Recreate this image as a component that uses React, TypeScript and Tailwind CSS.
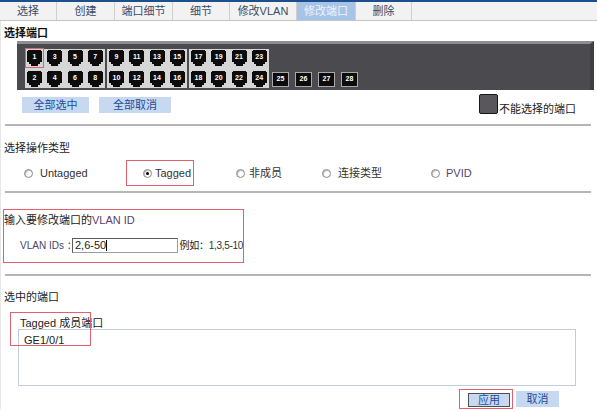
import React from "react";

const tabs = [
  { label: "选择", w: "w-[57px]" },
  { label: "创建", w: "w-[58px]" },
  { label: "端口细节", w: "w-[58px]" },
  { label: "细节", w: "w-[57px]" },
  { label: "修改VLAN", w: "w-[67px]" },
  { label: "修改端口", w: "w-[59px]", active: true },
  { label: "删除", w: "w-[56px]" },
];

const groups = [
  [1, 3, 5, 7, 2, 4, 6, 8],
  [9, 11, 13, 15, 10, 12, 14, 16],
  [17, 19, 21, 23, 18, 20, 22, 24],
];

function Port({ n, selected }: { n: number; selected?: boolean }) {
  return (
    <div
      className={
        "relative w-[15px] h-[16px] " +
        (selected ? "outline outline-1 outline-[#e4606c] outline-offset-[1px]" : "")
      }
    >
      <svg width="15" height="16" viewBox="0 0 15 16" className="absolute inset-0">
        <path d="M1 0H14V1H15V12H13V14H11V16H4V14H2V12H0V1H1Z" fill="#0c0c0c" />
      </svg>
      <span className="absolute inset-x-0 top-[3px] text-center text-[7px] leading-[8px] font-bold text-white">
        {n}
      </span>
    </div>
  );
}

function Radio({ checked }: { checked?: boolean }) {
  return (
    <span className="flex items-center justify-center w-[9px] h-[9px] rounded-full border border-[#8a8a8a] bg-white shadow-[inset_1px_1px_1px_#bbb]">
      {checked && <span className="w-[3px] h-[3px] rounded-full bg-black" />}
    </span>
  );
}

function Divider() {
  return <div className="ml-[4px] w-[586px] h-[2px] bg-[#b6b6b6]" />;
}

export default function App() {
  return (
    <div className="w-[597px] h-[412px] bg-white overflow-hidden font-['Liberation_Sans','Noto_Sans_CJK_SC',sans-serif] text-[11px] text-[#222]">
      {/* Tab bar */}
      <div className="flex h-[21px] border-t-2 border-[#1d4f8c] border-b border-b-[#c4c4c4] bg-[#f2f2f2]">
        {tabs.map((t) => (
          <div
            key={t.label}
            className={
              t.w +
              " flex items-center justify-center border-r border-[#cfcfcf] " +
              (t.active ? "bg-[#a7c3e6] text-[#eef4fb]" : "text-[#3c4a66]")
            }
          >
            {t.label}
          </div>
        ))}
      </div>

      <div className="border-l border-[#e6e6e6]">
        {/* Select ports */}
        <div className="h-[20px] pt-[4px] pl-[3px] flex items-center font-bold text-[#111]">选择端口</div>

        <div className="ml-[16px] w-[577px] h-[49px] bg-[#4b4a4f] border-t-[3px] border-[#8e8d92] border-r-[4px] border-r-[#3f3e43] flex items-start pt-[5px] pl-[8px] gap-[2px]">
          {groups.map((g, gi) => (
            <div key={gi} className="w-[80px] h-[39px] bg-[#d6d6d6] px-[2px] py-[1px] grid grid-cols-4 gap-x-[5px] gap-y-[5px] content-start">
              {g.map((n) => (
                <Port key={n} n={n} selected={n === 1} />
              ))}
            </div>
          ))}
          <div className="flex gap-[6px] pt-[23px] pl-[1px]">
            {[25, 26, 27, 28].map((n) => (
              <div
                key={n}
                className="w-[17px] h-[15px] bg-[#0c0c0c] border border-[#a9a9a9] flex items-center justify-center text-[7px] font-bold text-white"
              >
                {n}
              </div>
            ))}
          </div>
        </div>

        <div className="h-[30px] flex items-start">
          <div className="flex gap-[10px] pl-[21px] pt-[7px]">
            <button className="w-[67px] h-[16px] bg-[#c6d9f1] text-[#1d4c9c] text-[11px] leading-[16px]">全部选中</button>
            <button className="w-[72px] h-[16px] bg-[#c6d9f1] text-[#1d4c9c] text-[11px] leading-[16px]">全部取消</button>
          </div>
          <div className="ml-auto mr-[21px] flex items-end pt-[4px]">
            <div className="w-[19px] h-[20px] bg-[#59575b] border border-[#161616] rounded-[2px]" />
            <span className="ml-[1px] leading-[12px] mb-[-1px]">不能选择的端口</span>
          </div>
        </div>

        <div className="h-[4px]" />
        <Divider />

        {/* Operation type */}
        <div className="h-[34px] pt-[14px] pl-[3px] leading-[16px]">选择操作类型</div>
        <div className="h-[26px] flex items-center pl-[23px] text-[#333]">
          <div className="w-[102px] flex items-center gap-[7px]">
            <Radio />
            <span>Untagged</span>
          </div>
          <div className="w-[68px] h-[26px] border border-[#e4606c] pl-[16px] flex items-center gap-[3px]">
            <Radio checked />
            <span>Tagged</span>
          </div>
          <div className="w-[128px] pl-[42px] flex items-center gap-[4px]">
            <Radio />
            <span>非成员</span>
          </div>
          <div className="w-[109px] flex items-center gap-[7px]">
            <Radio />
            <span>连接类型</span>
          </div>
          <div className="flex items-center gap-[6px]">
            <Radio />
            <span className="text-[#5a3f72]">PVID</span>
          </div>
        </div>
        <div className="h-[5px]" />
        <Divider />

        {/* VLAN ID */}
        <div className="h-[16px]" />
        <div className="ml-[2px] w-[241px] h-[54px] border border-[#e4606c]">
          <div className="h-[20px] flex items-center">
            输入要修改端口的<span className="text-[#5a3f72]">VLAN ID</span>
          </div>
          <div className="flex items-center h-[30px] pl-[16px] whitespace-nowrap">
            <span className="w-[52px] text-[10px] text-[#4a3f6e]">VLAN IDs ：</span>
            <div className="w-[109px] h-[15px] border border-[#9c9c9c] border-t-[#5c5c5c] border-l-[#5c5c5c] pl-[2px] flex items-center text-[11px] text-[#222]">
              2,6-50<span className="w-px h-[11px] bg-black" />
            </div>
            <span className="ml-[2px] text-[10px] tracking-[-0.3px]">
              例如：<span className="text-[#333]">1,3,5-10</span>
            </span>
          </div>
        </div>
        <div className="h-[11px]" />
        <Divider />

        {/* Selected ports */}
        <div className="h-[36px] pt-[6px] pl-[3px] flex items-center">选中的端口</div>
        <div className="relative">
          <div className="h-[17px] pt-[5px] pl-[19px] flex items-center leading-[12px]">Tagged 成员端口</div>
          <div className="ml-[17px] w-[558px] h-[57px] border border-[#c3cbe0] pt-[2px] pl-[5px] text-[#222]">GE1/0/1</div>
          <div className="absolute left-[9px] top-0 w-[81px] h-[34px] border border-[#e4606c]" />
        </div>
        <div className="flex justify-end items-start pr-[38px] pt-[3px] gap-[3px]">
          <div className="w-[54px] h-[20px] border border-[#e4606c] pl-[8px] pt-[2px]">
            <button className="w-[42px] h-[14px] bg-[#c6d9f1] border border-[#505050] text-[#1d4c9c] text-[11px] leading-[12px]">应用</button>
          </div>
          <button className="mt-[2px] w-[43px] h-[16px] bg-[#c6d9f1] text-[#1d4c9c] text-[11px] leading-[16px]">取消</button>
        </div>
      </div>
    </div>
  );
}
